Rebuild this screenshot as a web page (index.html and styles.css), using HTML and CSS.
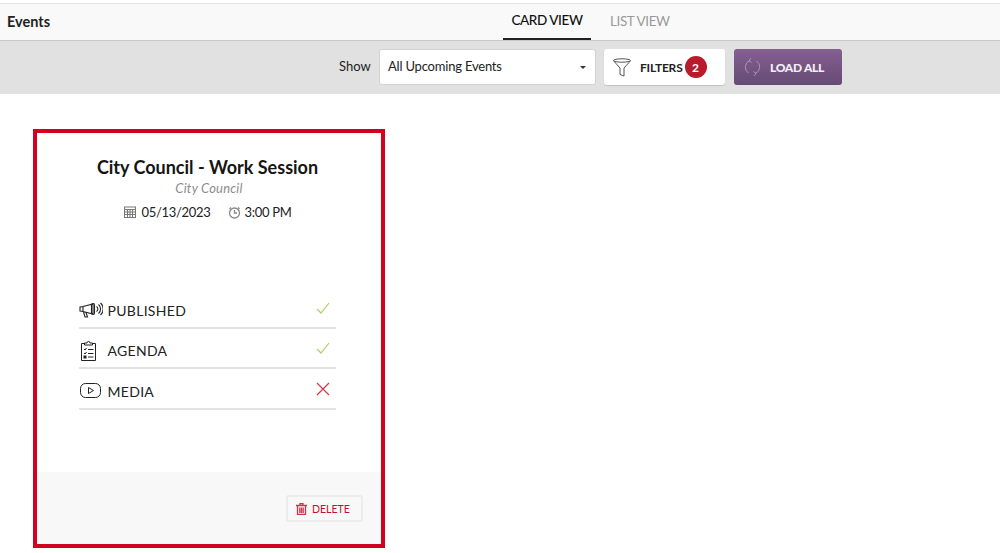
FILE: index.html
```html
<!DOCTYPE html>
<html lang="en">
<head>
<meta charset="utf-8">
<title>Events</title>
<link rel="stylesheet" href="styles.css">
</head>
<body>
<header class="topbar">
  <div class="title">Events</div>
  <nav class="tabs">
    <a class="tab active">CARD VIEW</a>
    <a class="tab">LIST VIEW</a>
  </nav>
</header>
<section class="toolbar">
  <span class="show">Show</span>
  <div class="select"><span>All Upcoming Events</span><i class="caret"></i></div>
  <div class="filters">
    <svg class="funnel" width="20" height="20" viewBox="0 0 20 20" fill="none" stroke="#555" stroke-width="1"><ellipse cx="10" cy="3.5" rx="8.5" ry="1.7"/><path d="M1.5 3.8 8 11v6.5l4 1.5v-8l6.500-7.200"/></svg>
    <b>FILTERS</b>
    <span class="badge">2</span>
  </div>
  <div class="loadall">
    <svg width="17" height="20" viewBox="0 0 17 20" fill="none" stroke="#a893b3" stroke-width="1"><path d="M6 3.500A7 7 0 0 0 4.500 16"/><path d="M11 16.500A7 7 0 0 0 12.500 4"/><path d="M7 1 5 3.500 7.500 5.500M10 19l2-2.500-2.500-2"/></svg>
    <b>LOAD ALL</b>
  </div>
</section>
<main class="content">
  <article class="card">
    <div class="card-body">
      <h2>City Council - Work Session</h2>
      <div class="sub">City Council</div>
      <div class="when">
        <svg width="12" height="12" viewBox="0 0 12 12" fill="none" stroke="#777" stroke-width="1"><rect x=".5" y="1" width="11" height="10.500"/><path d="M.5 3.500h11M.5 6h11M.5 8.500h11M3.500 3.500v8M6 3.500v8M8.500 3.500v8"/></svg>
        <span class="date">05/13/2023</span>
        <svg class="clock" width="13" height="13" viewBox="0 0 13 13" fill="none" stroke="#888" stroke-width="1.300"><circle cx="6.500" cy="7" r="5"/><path d="M6.500 4v3h2.500M3 1.500 1.500 3M10 1.500 11.500 3"/></svg>
        <span>3:00 PM</span>
      </div>
      <ul class="checks">
        <li>
          <svg width="24" height="18" viewBox="0 0 24 18" fill="none" stroke="#222" stroke-width="1.100"><path d="M1 6v4l3 .5L14 13V3L4 5.500zM4 5.500v5M4.500 11l1.500 5h2.500L7 11.600"/><rect x="12.500" y="2.500" width="3" height="11" rx="1.500"/><path d="M17.500 5.500a3 3 0 0 1 0 5M19.500 3.500a6 6 0 0 1 0 9M21.500 2a8 8 0 0 1 0 12"/></svg>
          <span class="lbl">PUBLISHED</span>
          <svg class="mark" width="14" height="14" viewBox="0 0 14 14" fill="none" stroke="#a9d26a" stroke-width="1.200"><path d="M1 8l4 4 8-10"/></svg>
        </li>
        <li>
          <svg width="24" height="20" viewBox="0 0 24 20" fill="none" stroke="#222" stroke-width="1"><path d="M5 2.500H2.500v17h14v-17H14"/><path d="M5.500 4V2h2.500a1.500 1.500 0 0 1 3 0h2.500v2zM5 8l1 1 1.500-2M5 12l1 1 1.500-2M9 8.500h5.500M9 12.500h5.500M9 16h5.500"/><rect x="5" y="15" width="2" height="2" fill="#222"/></svg>
          <span class="lbl">AGENDA</span>
          <svg class="mark" width="14" height="14" viewBox="0 0 14 14" fill="none" stroke="#a9d26a" stroke-width="1.200"><path d="M1 8l4 4 8-10"/></svg>
        </li>
        <li>
          <svg width="24" height="18" viewBox="0 0 24 18" fill="none" stroke="#222" stroke-width="1"><rect x="1.500" y="1.500" width="20" height="14" rx="5"/><path d="M9.500 5.500v6l5-3z"/></svg>
          <span class="lbl">MEDIA</span>
          <svg class="mark" width="14" height="14" viewBox="0 0 14 14" fill="none" stroke="#d0354a" stroke-width="1.200"><path d="M1 1l12 12M13 1 1 13"/></svg>
        </li>
      </ul>
    </div>
    <footer class="card-foot">
      <div class="delete">
        <svg width="11" height="12" viewBox="0 0 11 12" fill="none" stroke="#c4394c" stroke-width="1.300"><path d="M0 2.500h11M4 2V.5h3V2M1.500 3v8.500h8V3M3.800 4.500v5.500M5.500 4.500v5.500M7.200 4.500v5.500"/></svg>
        <span>DELETE</span>
      </div>
    </footer>
  </article>
</main>
</body>
</html>
```
FILE: styles.css
```css
* { box-sizing: border-box; }
html, body { margin: 0; padding: 0; background: #fff; }
body { font-family: Lato, "Open Sans", sans-serif; color: #111; height: 553px; overflow: hidden; }

.topbar {
  position: relative;
  margin-top: 3px;
  height: 38px;
  display: flex;
  align-items: center;
  background: #f9f9f9;
  border-top: 1px solid #e4e4e4;
  border-bottom: 1px solid #c9c9c9;
}
.title { position: absolute; left: 7px; top: 9px; font-size: 14.500px; font-weight: 700; color: #222; line-height: 18px; }
.tabs { display: flex; gap: 19px; height: 37px; margin-left: 503px; }
.tab { display: flex; align-items: center; justify-content: center; font-size: 13.500px; color: #999; letter-spacing: -.4px; padding-bottom: 1px; height: 36px; }
.tab.active { width: 88px; color: #111; border-bottom: 2px solid #222; font-weight: 500; }

.toolbar {
  height: 53px;
  background: #e1e1e1;
  display: flex;
  align-items: center;
  padding-left: 339px;
  padding-bottom: 1px;
}
.show { font-size: 13px; color: #222; width: 40px; margin-top: -2px; }
.select {
  width: 217px;
  height: 36px;
  background: #fff;
  border: 1px solid #d2d2d2;
  border-radius: 3px;
  display: flex;
  align-items: center;
  justify-content: space-between;
  padding: 0 8px 2px 8px;
  font-size: 13px;
  letter-spacing: -.2px;
  color: #222;
}
.caret { width: 0; height: 0; border-left: 3px solid transparent; border-right: 3px solid transparent; border-top: 3px solid #333; margin-top: 3px; margin-right: 1px; }
.filters {
  margin-left: 8px;
  width: 121px;
  height: 36px;
  background: #fff;
  border-radius: 3px;
  box-shadow: 0 1px 1px rgba(0,0,0,.15);
  display: flex;
  align-items: center;
  padding-left: 8px;
}
.filters b { font-size: 12px; font-weight: 700; color: #222; margin-left: 8px; letter-spacing: -.2px; }
.badge { width: 22px; height: 22px; margin-left: 2px; border-radius: 50%; background: #b81c2c; color: #fff; font-size: 12px; font-weight: 700; display: flex; align-items: center; justify-content: center; }
.loadall {
  margin-left: 9px;
  width: 108px;
  height: 36px;
  border-radius: 3px;
  background: linear-gradient(#855f92, #664a74);
  display: flex;
  align-items: center;
  padding-left: 10px;
  gap: 9px;
}
.loadall b { color: #f2eef4; font-size: 12px; font-weight: 900; letter-spacing: -.3px; }

.content { padding: 35px 0 0 33px; }
.card {
  width: 352px;
  height: 419px;
  border: 4px solid #d0021f;
  display: flex;
  flex-direction: column;
  background: #fff;
}
.card-body { flex: 1; padding-top: 22px; display: flex; flex-direction: column; align-items: center; }
h2 { margin: 0 0 0 -3px; font-size: 18px; line-height: 24px; font-weight: 700; color: #151515; }
.sub { font-size: 13px; line-height: 16px; font-style: italic; color: #8d8d8d; margin-top: 1px; letter-spacing: .2px; }
.when { display: flex; align-items: center; font-size: 13px; line-height: 18px; color: #222; margin-top: 7px; margin-left: -2px; letter-spacing: -.3px; }
.date { margin-left: 5px; }
.clock { margin-left: 17px; margin-right: 4px; }

.checks { list-style: none; margin: 67px 0 0 -4px; padding: 0; width: 257px; }
.checks li {
  display: flex;
  align-items: center;
  height: 40.500px;
  border-bottom: 2px solid #e3e3e3;
  padding-top: 6px;
}
.checks li > svg:first-child { width: 24px; flex: none; }
.lbl { margin-left: 5px; font-size: 14px; color: #222; flex: 1; letter-spacing: .3px; }
.mark { margin-right: 6px; margin-top: -5px; }

.card-foot { height: 72px; background: #f8f8f8; display: flex; justify-content: flex-end; padding: 23px 18px 0 0; }
.delete {
  width: 77px;
  height: 27px;
  border: 2px solid #ececec;
  border-radius: 2px;
  display: flex;
  align-items: center;
  padding-left: 8px;
  gap: 5px;
  font-size: 10.500px;
  color: #c8102e;
}
```
